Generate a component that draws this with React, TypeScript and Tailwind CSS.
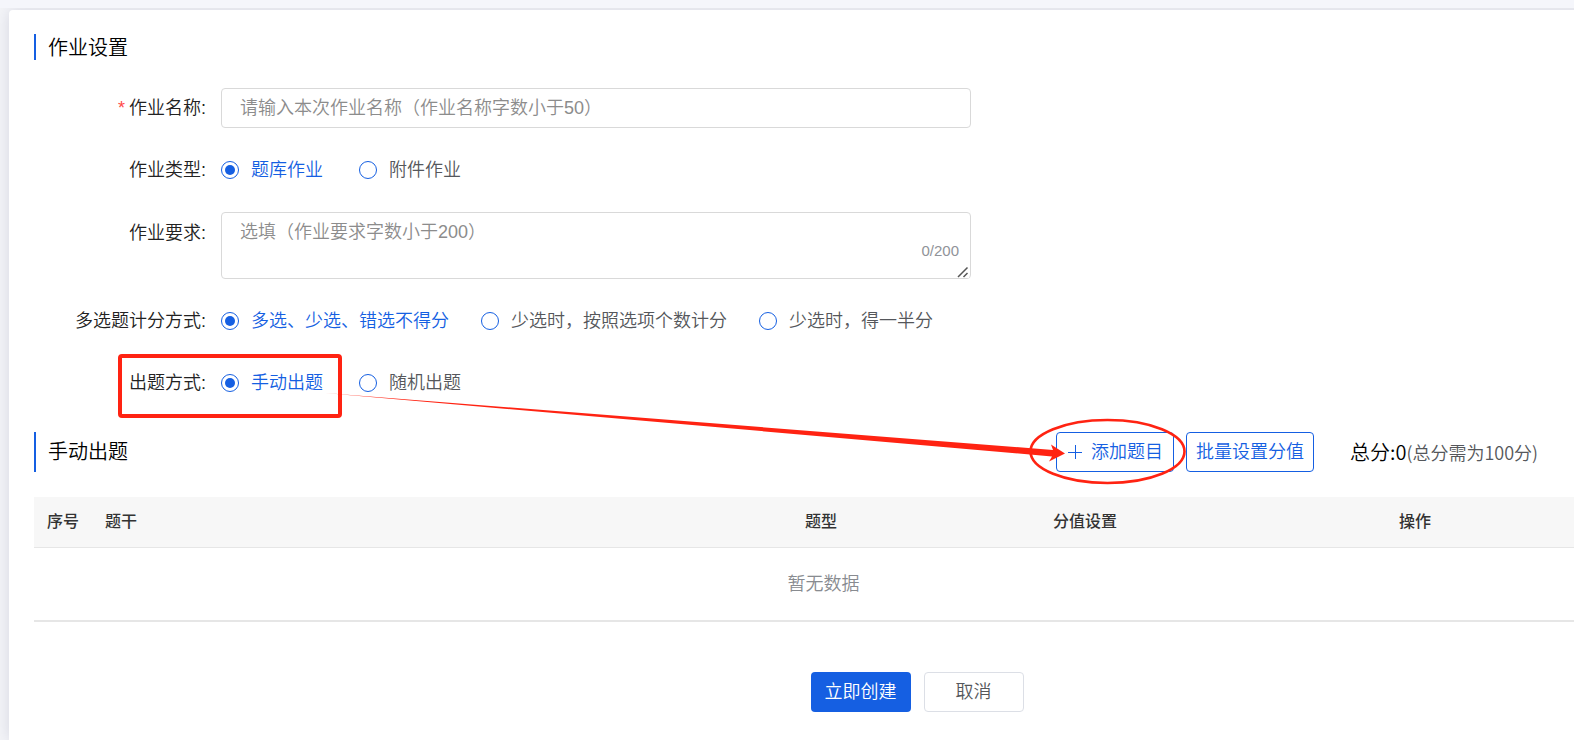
import React, { useState } from 'react';

const SCORING = ['多选、少选、错选不得分', '少选时，按照选项个数计分', '少选时，得一半分'];

interface RadioRowProps {
  label: string;
  name: string;
  options: string[];
}

const FieldLabel: React.FC<{ children: React.ReactNode }> = ({ children }) => (
  <span className="block w-[172px] shrink-0 text-right text-[#222222]">{children}</span>
);

const RadioRow: React.FC<RadioRowProps> = ({ label, name, options }) => {
  const [selected, setSelected] = useState(options[0]);

  return (
    <div role="radiogroup" aria-label={label} className="flex h-10 items-center gap-[15px]">
      <FieldLabel>{label}:</FieldLabel>
      <div className="flex gap-8">
        {options.map((option) => (
          <label
            key={option}
            className="flex min-w-[106px] cursor-pointer items-center gap-3 text-[#55575b] has-checked:text-[#155fe2]"
          >
            <input
              type="radio"
              name={name}
              checked={selected === option}
              onChange={() => setSelected(option)}
              className="grid size-[18px] appearance-none place-items-center rounded-full border border-[#155fe2] bg-white before:size-[10px] before:rounded-full checked:before:bg-[#155fe2]"
            />
            {option}
          </label>
        ))}
      </div>
    </div>
  );
};

// Red guide marks laid over the form
const Guide: React.FC = () => (
  <svg className="pointer-events-none absolute -top-2 left-0 h-full w-full" fill="none" stroke="#ff2312" aria-hidden="true">
    <rect x="120" y="356" width="220" height="60" rx="2" strokeWidth="4" />
    <ellipse cx="1107.5" cy="451.5" rx="77" ry="31.5" strokeWidth="2.6" />
    <path d="M325 393L1053 450L1051 444.500L1065 453.500L1049 461.500L1052 456.500Z" fill="#ff2312" stroke="none" />
  </svg>
);

export default function App() {
  const [requirement, setRequirement] = useState('');

  return (
    <div className="relative flex min-h-screen flex-col overflow-hidden border-t-8 border-[#f5f6fb] bg-[#f3f4f8] pt-[2px] pl-[9px] font-['Liberation_Sans','Noto_Sans_CJK_SC',sans-serif] text-[18px] leading-[26px] font-[350]">
      <main className="-mr-16 flex-1 rounded-t bg-white px-[25px] pt-6 pb-7 shadow-[0_0_16px_rgba(20,20,60,0.12)]">
        <h2 className="border-l-2 border-[#155fe2] pt-[2px] pl-3 text-[20px] leading-6 text-black">作业设置</h2>

        <form id="homework" className="mt-7 flex flex-col gap-[22px]" onSubmit={(e) => e.preventDefault()}>
          <div className="flex items-center gap-[15px]">
            <label htmlFor="name">
              <FieldLabel>
                <span className="mr-1 text-[#ff4949]">*</span>
                作业名称:
              </FieldLabel>
            </label>
            <input
              id="name"
              type="text"
              maxLength={50}
              placeholder="请输入本次作业名称（作业名称字数小于50）"
              className="h-10 w-[750px] rounded border border-[#d9d9d9] px-[18px] outline-none placeholder:text-[#8c8c8c]"
            />
          </div>

          <RadioRow label="作业类型" name="type" options={['题库作业', '附件作业']} />

          <div className="flex gap-[15px]">
            <label htmlFor="requirement" className="pt-2">
              <FieldLabel>作业要求:</FieldLabel>
            </label>
            <div className="relative w-[750px]">
              <textarea
                id="requirement"
                maxLength={200}
                value={requirement}
                onChange={(e) => setRequirement(e.target.value)}
                placeholder="选填（作业要求字数小于200）"
                className="block h-[67px] w-full resize rounded border border-[#d9d9d9] px-[18px] py-[6px] outline-none placeholder:text-[#8c8c8c]"
              />
              <span className="absolute right-3 bottom-4 text-[15px] leading-6 font-normal text-[#909399]">
                {requirement.length}/200
              </span>
              <svg
                className="pointer-events-none absolute right-[2px] bottom-px size-3 bg-white"
                viewBox="0 0 12 12"
                stroke="#555555"
                strokeWidth="1.500"
                aria-hidden="true"
              >
                <path d="M1 11L10.500 1.500M6.500 11L10.500 7" />
              </svg>
            </div>
          </div>

          <RadioRow label="多选题计分方式" name="scoring" options={SCORING} />
          <RadioRow label="出题方式" name="mode" options={['手动出题', '随机出题']} />
        </form>

        <section className="mt-[29px]">
          <div className="flex items-center border-l-2 border-[#155fe2] pl-3">
            <h2 className="text-[20px] text-black">手动出题</h2>
            <div className="ml-auto flex items-center gap-3 pr-[75px]">
              <button type="button" className="flex h-10 items-center gap-2 rounded border border-[#155fe2] px-[10px] text-[#155fe2]">
                <svg className="size-4" viewBox="0 0 16 16" stroke="currentColor" aria-hidden="true">
                  <path d="M8.500 1V15M1 8.500H15" />
                </svg>
                添加题目
              </button>
              <button type="button" className="h-10 rounded border border-[#155fe2] px-[9px] text-[#155fe2]">
                批量设置分值
              </button>
              <p className="ml-6 font-['Noto_Sans_CJK_SC',sans-serif] text-[#55575b]">
                <span className="text-[20px] text-black">总分:0</span>(总分需为100分)
              </p>
            </div>
          </div>

          <table className="mt-[25px] w-full table-fixed border-b-2 border-[#e6e6e6]">
            <thead className="border-b border-[#e6e6e6] bg-[#f7f7f7] text-[16px] text-[#333333]">
              <tr className="h-[50px]">
                <th className="w-[58px] px-[13px] text-left font-medium">序号</th>
                <th className="px-[13px] text-left font-medium">题干</th>
                <th className="w-[264px] font-medium">题型</th>
                <th className="w-[264px] font-medium">分值设置</th>
                <th className="w-[396px] font-medium">操作</th>
              </tr>
            </thead>
            <tbody>
              <tr className="h-[74px]">
                <td colSpan={5} className="text-center text-[#888b90]">暂无数据</td>
              </tr>
            </tbody>
          </table>
        </section>

        <div className="mt-[50px] ml-[187px] flex justify-center gap-[13px]">
          <button type="submit" form="homework" className="h-10 w-[100px] rounded bg-[#155fe2] text-white">
            立即创建
          </button>
          <button type="button" className="h-10 w-[100px] rounded border border-[#dcdfe6] text-[#55575b]">
            取消
          </button>
        </div>
      </main>
      <Guide />
    </div>
  );
}
